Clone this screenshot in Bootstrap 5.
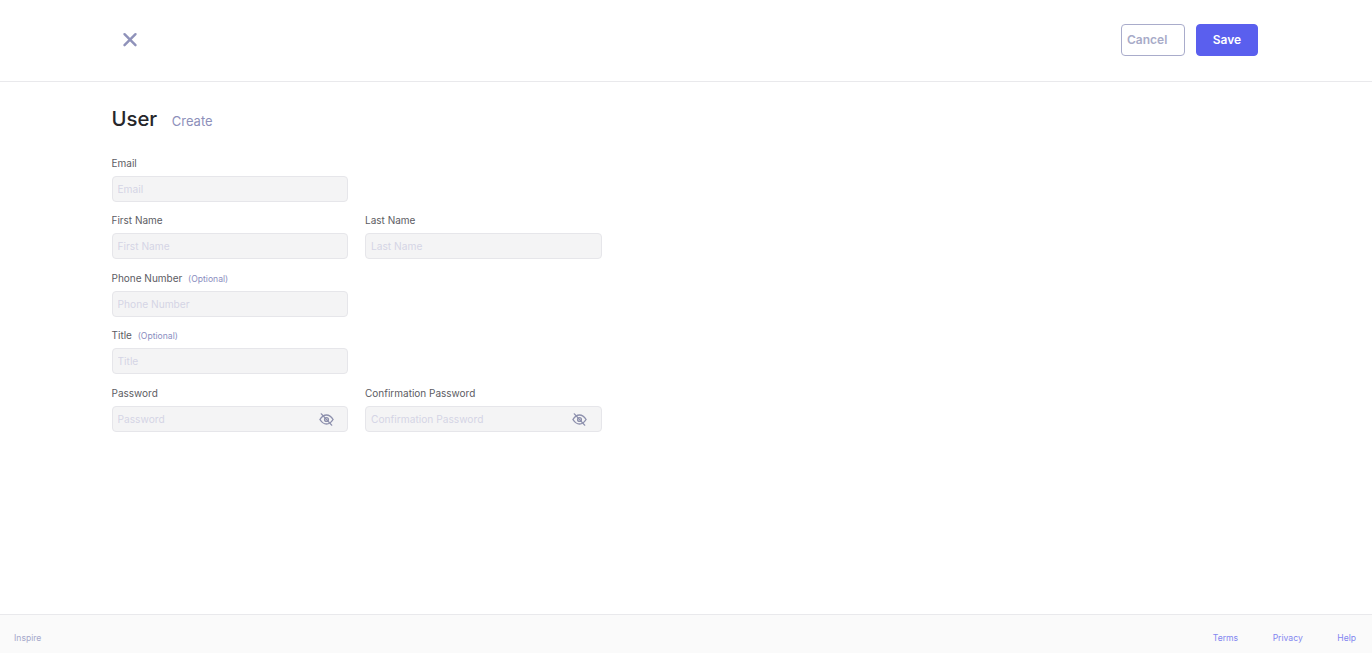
<!DOCTYPE html>
<html lang="en">
<head>
<meta charset="utf-8">
<title>User Create</title>
<link href="https://cdn.jsdelivr.net/npm/bootstrap@5.3.0/dist/css/bootstrap.min.css" rel="stylesheet">
<style>
html, body { height: 100%; }
body { font-family: Inter, "Liberation Sans", sans-serif; background: #fff; color: #5c5c63; font-size: 10px; }
.page-wrap { height: 653px; }
.top-bar { height: 82px; border-bottom: 1px solid #e9e9ec; padding: 0 114px 2px 112px; }
.close-link { width: 36px; height: 36px; color: #8f92ba; }
.btn-cancel, .btn-save { height: 32px; border-radius: 4px; font-size: 12px; font-weight: 600; line-height: 1; display: flex; align-items: center; }
.btn-cancel { width: 64px; padding: 0 0 0 5px; background: #fff; border: 1px solid #a9accb; color: #a8abc8; }
.btn-save { width: 62px; justify-content: center; padding: 0; background: #5a5fee; border: 1px solid #5a5fee; color: #fff; }
.btn-gap { gap: 11px; }
.form-area { padding: 24px 0 0 111.5px; }
.page-title { font-size: 20.3px; font-weight: 500; color: #26262a; line-height: 26px; margin: 0; }
.page-sub { font-size: 13px; color: #8d90ba; margin-left: 14.500px; line-height: 26px; position: relative; top: 2px; }
.heading-row { height: 26px; margin-bottom: 23.600px; }
.form-rows { display: flex; flex-direction: column; gap: 11.500px; }
.field-row { display: flex; gap: 17px; }
.field { width: 236.500px; }
.field-label { display: block; font-size: 10px; line-height: 14px; margin: 0 0 6px; color: #5c5c63; height: 14px; }
.opt { font-size: 8.600px; color: #8a8dc0; margin-left: 3px; }
.field-input { height: 26px; width: 100%; font-size: 10.200px; padding: 0 5px; background: #f4f4f5; border: 1px solid #e6e6ea; border-radius: 4px; color: #4f4f57; box-shadow: none; }
.field-input::placeholder { color: #d4d5e5; opacity: 1; }
.field-input:focus { background: #f4f4f5; border-color: #e6e6ea; box-shadow: none; }
.input-holder { position: relative; }
.eye { position: absolute; right: 14.500px; top: 6px; width: 15px; height: 15px; color: #8d90ad; }
.foot-bar { height: 39px; background: #fafafa; border-top: 1px solid #e9e9ec; padding: 8px 16px 0 14px; font-size: 8.600px; }
.foot-brand { color: #a5a8cb; text-decoration: none; }
.foot-link { color: #8286f0; text-decoration: none; margin-left: 34.500px; }
</style>
</head>
<body>
<div class="page-wrap d-flex flex-column">
  <header class="top-bar d-flex align-items-center justify-content-between flex-shrink-0">
    <a class="close-link d-flex align-items-center" href="#" aria-label="Close">
      <svg class="ms-2" width="20" height="20" viewBox="0 0 20 20" fill="none" stroke="currentColor" stroke-width="2.400" stroke-linecap="round"><path d="M4.500 4.200l11 11M15.500 4.200l-11 11"/></svg>
    </a>
    <div class="d-flex btn-gap">
      <button type="button" class="btn btn-cancel">Cancel</button>
      <button type="button" class="btn btn-save">Save</button>
    </div>
  </header>
  <main class="form-area flex-grow-1">
    <div class="heading-row d-flex align-items-center">
      <h1 class="page-title">User</h1>
      <span class="page-sub">Create</span>
    </div>
    <form class="form-rows">
      <div class="field-row">
        <div class="field"><label class="field-label">Email</label><input class="form-control field-input" placeholder="Email"></div>
      </div>
      <div class="field-row">
        <div class="field"><label class="field-label">First Name</label><input class="form-control field-input" placeholder="First Name"></div>
        <div class="field"><label class="field-label">Last Name</label><input class="form-control field-input" placeholder="Last Name"></div>
      </div>
      <div class="field-row">
        <div class="field"><label class="field-label">Phone Number <span class="opt">(Optional)</span></label><input class="form-control field-input" placeholder="Phone Number"></div>
      </div>
      <div class="field-row">
        <div class="field"><label class="field-label">Title <span class="opt">(Optional)</span></label><input class="form-control field-input" placeholder="Title"></div>
      </div>
      <div class="field-row">
        <div class="field"><label class="field-label">Password</label>
          <div class="input-holder"><input class="form-control field-input" placeholder="Password">
            <svg class="eye" viewBox="0 0 16 16" fill="none" stroke="currentColor" stroke-width="1.500" stroke-linecap="round"><path d="M1 8c2-3.200 4.400-4.800 7-4.800S13 4.800 15 8c-2 3.200-4.400 4.800-7 4.800S3 11.200 1 8z"/><circle cx="8" cy="8" r="2"/><path d="M2.500 2l11 12"/></svg>
          </div>
        </div>
        <div class="field"><label class="field-label">Confirmation Password</label>
          <div class="input-holder"><input class="form-control field-input" placeholder="Confirmation Password">
            <svg class="eye" viewBox="0 0 16 16" fill="none" stroke="currentColor" stroke-width="1.500" stroke-linecap="round"><path d="M1 8c2-3.200 4.400-4.800 7-4.800S13 4.800 15 8c-2 3.200-4.400 4.800-7 4.800S3 11.200 1 8z"/><circle cx="8" cy="8" r="2"/><path d="M2.500 2l11 12"/></svg>
          </div>
        </div>
      </div>
    </form>
  </main>
  <footer class="foot-bar d-flex align-items-center justify-content-between flex-shrink-0">
    <a class="foot-brand" href="#">Inspire</a>
    <div class="d-flex">
      <a class="foot-link" href="#">Terms</a>
      <a class="foot-link" href="#">Privacy</a>
      <a class="foot-link" href="#">Help</a>
    </div>
  </footer>
</div>
<script src="https://cdn.jsdelivr.net/npm/bootstrap@5.3.0/dist/js/bootstrap.bundle.min.js"></script>
</body>
</html>
